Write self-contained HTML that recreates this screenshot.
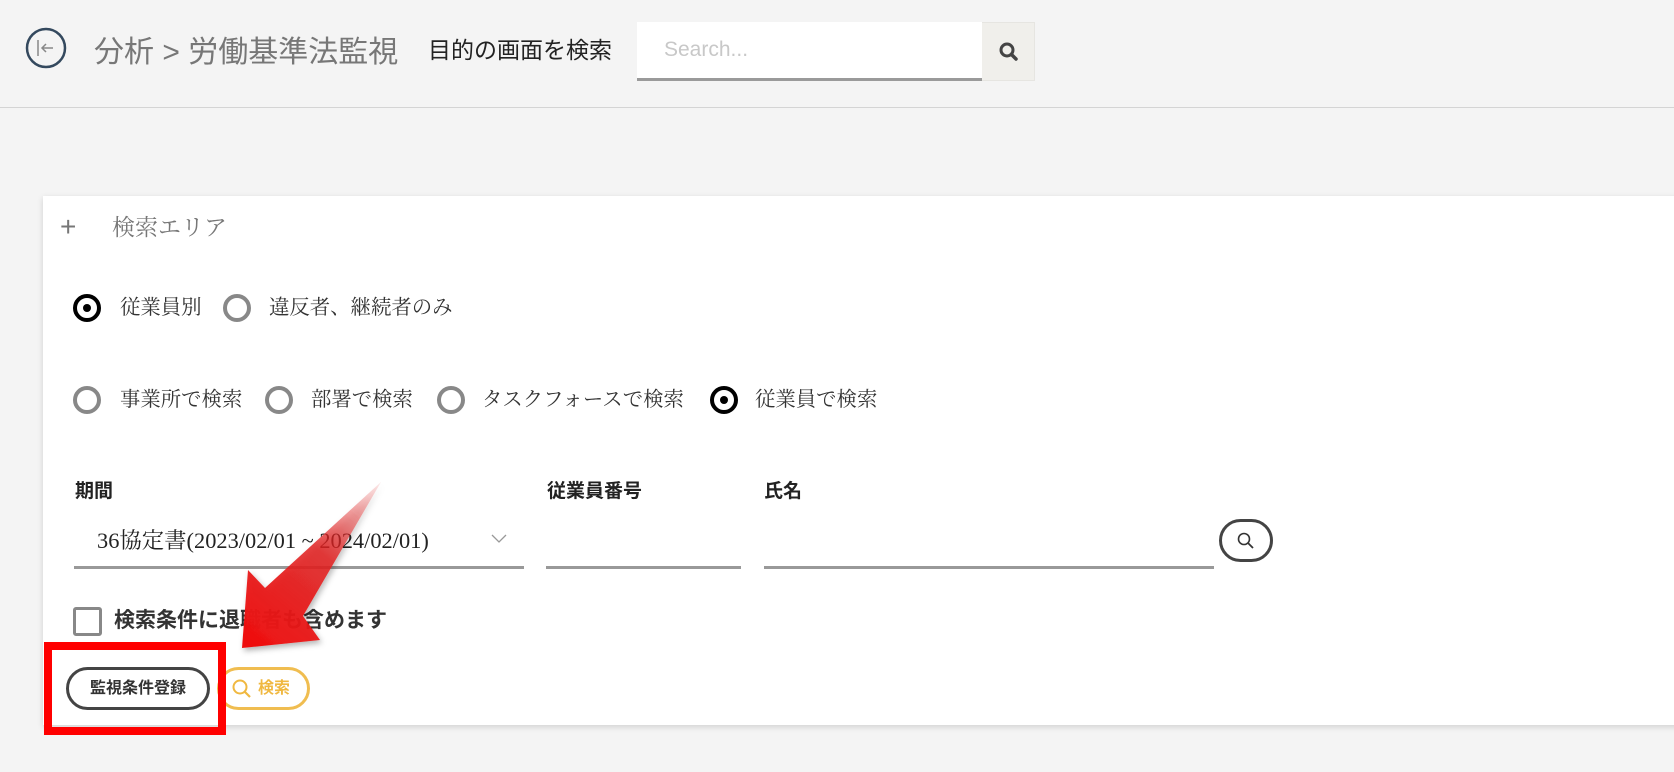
<!DOCTYPE html>
<html><head><meta charset="utf-8"><style>
*{box-sizing:border-box;margin:0;padding:0}
body{width:1674px;height:772px;background:#f4f4f4;position:relative;overflow:hidden;font-family:"Liberation Sans","Noto Sans CJK JP",sans-serif;color:#222}
.a{position:absolute}
.serif{font-family:"Liberation Serif","Noto Serif CJK JP",serif}
.radio{position:absolute;width:28px;height:28px;border-radius:50%;border:4px solid #888;background:#fff}
.radio.on{border-color:#000}
.radio.on::after{content:"";position:absolute;left:6px;top:6px;width:8px;height:8px;border-radius:50%;background:#000}
.lbl{position:absolute;font-size:20.4px;color:#333;line-height:28px}
.line{position:absolute;height:3px;background:#999}
</style></head><body>
<svg class="a" style="left:25px;top:27px" width="42" height="42" viewBox="0 0 42 42"><circle cx="21" cy="21" r="19" fill="none" stroke="#34495e" stroke-width="2.5"/><line x1="13" y1="13" x2="13" y2="29" stroke="#888" stroke-width="1.5"/><path d="M28 21H17M21 17l-4 4 4 4" fill="none" stroke="#888" stroke-width="1.5"/></svg>
<div class="a" style="left:94px;top:35px;font-size:30px;color:#777;line-height:36px">分析 &gt; 労働基準法監視</div>
<div class="a" style="left:428px;top:35px;font-size:23px;color:#222;line-height:30px">目的の画面を検索</div>
<div class="a" style="left:637px;top:22px;width:345px;height:59px;background:#fff;border-bottom:3px solid #9a9a9a"></div>
<div class="a" style="left:664px;top:38px;font-size:21px;color:#c8c8c8">Search...</div>
<div class="a" style="left:982px;top:22px;width:53px;height:59px;background:#f0efeb;border:1px solid #e6e5e1;border-left:none"></div>
<svg class="a" style="left:998px;top:41px" width="22" height="22" viewBox="0 0 22 22"><circle cx="9" cy="9" r="6" fill="none" stroke="#444" stroke-width="3"/><line x1="13.5" y1="13.5" x2="18" y2="18" stroke="#444" stroke-width="3.5" stroke-linecap="round"/></svg>
<div class="a" style="left:0;top:107px;width:1674px;height:1px;background:#d4d4d4"></div>

<div class="a" style="left:43px;top:196px;width:1640px;height:529px;background:#fff;box-shadow:0 2px 6px rgba(0,0,0,.15)"></div>
<div class="a" style="left:60px;top:212px;font-size:28px;color:#777;line-height:30px;font-weight:300">+</div>
<div class="a serif" style="left:112px;top:213px;font-size:23px;color:#777;line-height:30px">検索エリア</div>

<div class="radio on" style="left:73px;top:294px"></div><div class="lbl serif" style="left:120px;top:294px">従業員別</div>
<div class="radio" style="left:223px;top:294px"></div><div class="lbl serif" style="left:269px;top:294px">違反者、継続者のみ</div>

<div class="radio" style="left:73px;top:386px"></div><div class="lbl serif" style="left:120px;top:386px">事業所で検索</div>
<div class="radio" style="left:265px;top:386px"></div><div class="lbl serif" style="left:311px;top:386px">部署で検索</div>
<div class="radio" style="left:437px;top:386px"></div><div class="lbl serif" style="left:482px;top:386px">タスクフォースで検索</div>
<div class="radio on" style="left:710px;top:386px"></div><div class="lbl serif" style="left:755px;top:386px">従業員で検索</div>

<div class="a" style="left:75px;top:476px;font-size:19px;font-weight:bold;color:#222">期間</div>
<div class="a" style="left:547px;top:476px;font-size:19px;font-weight:bold;color:#222">従業員番号</div>
<div class="a" style="left:764px;top:476px;font-size:19px;font-weight:bold;color:#222">氏名</div>
<div class="a serif" style="left:97px;top:523px;font-size:22.4px;color:#222">36協定書(2023/02/01 ~ 2024/02/01)</div>
<svg class="a" style="left:491px;top:534px" width="16" height="10"><path d="M1 1l7 7 7-7" fill="none" stroke="#999" stroke-width="1.3"/></svg>
<div class="line" style="left:74px;top:566px;width:450px"></div>
<div class="line" style="left:546px;top:566px;width:195px"></div>
<div class="line" style="left:764px;top:566px;width:450px"></div>
<div class="a" style="left:1219px;top:519px;width:54px;height:43px;border:3px solid #444;border-radius:22px"></div>
<svg class="a" style="left:1236px;top:531px" width="20" height="20"><circle cx="8" cy="8" r="5.5" fill="none" stroke="#333" stroke-width="1.6"/><line x1="12" y1="12" x2="17" y2="17" stroke="#333" stroke-width="1.8"/></svg>

<div class="a" style="left:73px;top:607px;width:29px;height:29px;border:3px solid #888;border-radius:3px"></div>
<div class="a" style="left:114px;top:606px;font-size:21px;font-weight:bold;color:#333;line-height:30px">検索条件に退職者も含めます</div>

<div class="a" style="left:66px;top:667px;width:144px;height:43px;border:3px solid #444;border-radius:22px;font-size:16px;font-weight:bold;color:#333;text-align:center;line-height:37px">監視条件登録</div>
<div class="a" style="left:217px;top:667px;width:93px;height:43px;border:3px solid #f0bd50;border-radius:22px;font-size:16px;font-weight:bold;color:#f0b840;line-height:37px;padding-left:38px">検索</div>
<svg class="a" style="left:231px;top:678px" width="22" height="22"><circle cx="9" cy="9" r="6.5" fill="none" stroke="#f0b840" stroke-width="2"/><line x1="14" y1="14" x2="19" y2="19" stroke="#f0b840" stroke-width="2.2"/></svg>

<div class="a" style="left:44px;top:642px;width:182px;height:93px;border:8px solid #ff0000"></div>

<svg class="a" style="left:0;top:0" width="1674" height="772"><defs><linearGradient id="g" x1="381" y1="482" x2="250" y2="640" gradientUnits="userSpaceOnUse"><stop offset="0" stop-color="#e03030" stop-opacity=".1"/><stop offset=".45" stop-color="#e02020" stop-opacity=".85"/><stop offset="1" stop-color="#ee1010"/></linearGradient><filter id="s"><feDropShadow dx="2" dy="3" stdDeviation="3" flood-opacity=".3"/></filter></defs>
<polygon points="381,482 303,616 320,640 242,648 248,570 265,588" fill="url(#g)" filter="url(#s)"/></svg>
</body></html>
